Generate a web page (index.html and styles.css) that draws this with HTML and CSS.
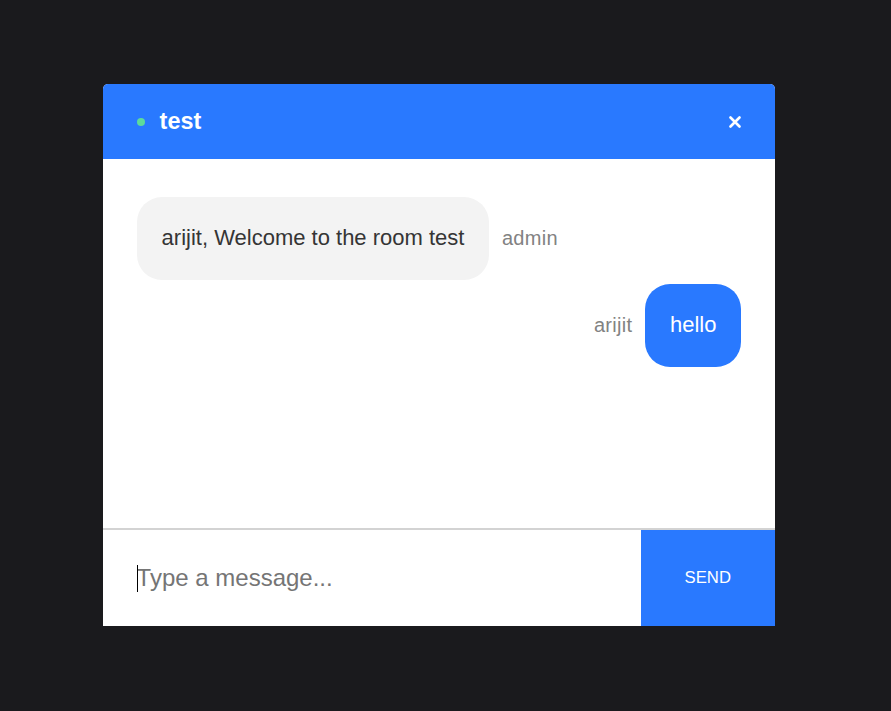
FILE: index.html
```html
<!DOCTYPE html>
<html>
<head>
<meta charset="utf-8">
<link rel="stylesheet" href="styles.css">
</head>
<body>
<div class="outer">
  <div class="chat">
    <div class="info-bar">
      <div class="info-left">
        <span class="online-dot"></span>
        <h3 class="room-name">test</h3>
      </div>
      <div class="info-right">
        <svg class="close-icon" width="12" height="12" viewBox="0 0 12 12"><path d="M1.5 1.5 L10.5 10.5 M10.5 1.5 L1.5 10.5" stroke="#fff" stroke-width="2.6" stroke-linecap="round"/></svg>
      </div>
    </div>
    <div class="messages">
      <div class="message start">
        <div class="bubble light"><p class="text dark">arijit, Welcome to the room test</p></div>
        <p class="sent pl">admin</p>
      </div>
      <div class="message end">
        <p class="sent pr">arijit</p>
        <div class="bubble blue"><p class="text white">hello</p></div>
      </div>
    </div>
    <form class="form">
      <div class="input-wrap">
        <input class="input" type="text" placeholder="Type a message...">
        <span class="caret"></span>
      </div>
      <button class="send" type="button">Send</button>
    </form>
  </div>
</div>
</body>
</html>
```
FILE: styles.css
```css
html, body {
  margin: 0;
  padding: 0;
  height: 100%;
}
body {
  background: #1a1a1d;
  font-family: "Liberation Sans", Arial, sans-serif;
}
.outer {
  display: flex;
  justify-content: center;
  align-items: center;
  height: 100%;
  padding-right: 13px;
  padding-bottom: 1px;
  box-sizing: border-box;
}
.chat {
  width: 672px;
  height: 542px;
  background: #fff;
  border-radius: 5px 5px 0 0;
  display: flex;
  flex-direction: column;
}
.info-bar {
  height: 75px;
  flex: none;
  background: #2979ff;
  border-radius: 5px 5px 0 0;
  display: flex;
  align-items: center;
  justify-content: space-between;
  color: #fff;
}
.info-left {
  display: flex;
  align-items: center;
  margin-left: 33.6px;
}
.online-dot {
  width: 8px;
  height: 8px;
  border-radius: 50%;
  background: #5ddb9b;
  margin-right: 15px;
}
.room-name {
  margin: 0;
  font-size: 23.4px;
  font-weight: bold;
}
.info-right {
  margin-right: 33.6px;
  display: flex;
  align-items: center;
}
.close-icon {
  display: block;
}
.messages {
  flex: 1;
  padding: 33.6px 0;
  box-sizing: border-box;
  overflow: hidden;
}
.message {
  display: flex;
  padding: 0 33.6px;
  margin-top: 4px;
}
.message.start { justify-content: flex-start; }
.message.end { justify-content: flex-end; }
.bubble {
  border-radius: 25px;
  padding: 6.25px 25px;
  display: inline-block;
}
.bubble.light { background: #f3f3f3; }
.bubble.blue { background: #2979ff; }
.text {
  margin: 22.5px 0;
  font-size: 22px;
  line-height: 25.5px;
}
.text.dark { color: #353535; }
.text.white { color: #fff; }
.sent {
  display: flex;
  align-items: center;
  margin: 0;
  color: #828282;
  font-size: 20px;
  letter-spacing: 0.3px;
}
.pl { padding-left: 12.5px; }
.pr { padding-right: 12.5px; }
.form {
  display: flex;
  border-top: 2px solid #d3d3d3;
  margin: 0;
  height: 96px;
  flex: none;
}
.input-wrap {
  width: 80%;
  position: relative;
  display: flex;
}
.input {
  border: none;
  border-radius: 0;
  outline: none;
  width: 100%;
  padding: 0 33.6px;
  font-size: 24px;
  font-family: "Liberation Sans", Arial, sans-serif;
  color: #333;
  box-sizing: border-box;
}
.input::placeholder { color: #757575; }
.caret {
  position: absolute;
  left: 33.6px;
  top: 35px;
  width: 1px;
  height: 27px;
  background: #000;
}
.send {
  width: 20%;
  border: none;
  background: #2979ff;
  color: #fff;
  text-transform: uppercase;
  font-size: 16.7px;
  font-family: "Liberation Sans", Arial, sans-serif;
  padding: 0;
}
```
